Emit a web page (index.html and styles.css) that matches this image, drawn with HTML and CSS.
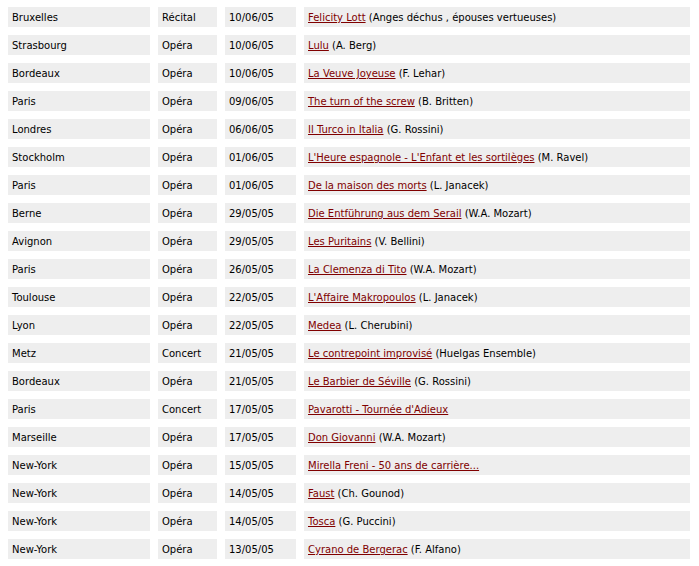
FILE: index.html
```html
<!DOCTYPE html>
<html lang="fr">
<head>
<meta charset="utf-8">
<title>Agenda</title>
<link rel="stylesheet" href="styles.css">
</head>
<body>
<table class="agenda">
<tr><td class="city">Bruxelles</td><td class="type">Récital</td><td class="date">10/06/05</td><td class="work"><a href="#">Felicity Lott</a> (Anges déchus , épouses vertueuses)</td></tr>
<tr><td class="city">Strasbourg</td><td class="type">Opéra</td><td class="date">10/06/05</td><td class="work"><a href="#">Lulu</a> (A. Berg)</td></tr>
<tr><td class="city">Bordeaux</td><td class="type">Opéra</td><td class="date">10/06/05</td><td class="work"><a href="#">La Veuve Joyeuse</a> (F. Lehar)</td></tr>
<tr><td class="city">Paris</td><td class="type">Opéra</td><td class="date">09/06/05</td><td class="work"><a href="#">The turn of the screw</a> (B. Britten)</td></tr>
<tr><td class="city">Londres</td><td class="type">Opéra</td><td class="date">06/06/05</td><td class="work"><a href="#">Il Turco in Italia</a> (G. Rossini)</td></tr>
<tr><td class="city">Stockholm</td><td class="type">Opéra</td><td class="date">01/06/05</td><td class="work"><a href="#">L'Heure espagnole - L'Enfant et les sortilèges</a> (M. Ravel)</td></tr>
<tr><td class="city">Paris</td><td class="type">Opéra</td><td class="date">01/06/05</td><td class="work"><a href="#">De la maison des morts</a> (L. Janacek)</td></tr>
<tr><td class="city">Berne</td><td class="type">Opéra</td><td class="date">29/05/05</td><td class="work"><a href="#">Die Entführung aus dem Serail</a> (W.A. Mozart)</td></tr>
<tr><td class="city">Avignon</td><td class="type">Opéra</td><td class="date">29/05/05</td><td class="work"><a href="#">Les Puritains</a> (V. Bellini)</td></tr>
<tr><td class="city">Paris</td><td class="type">Opéra</td><td class="date">26/05/05</td><td class="work"><a href="#">La Clemenza di Tito</a> (W.A. Mozart)</td></tr>
<tr><td class="city">Toulouse</td><td class="type">Opéra</td><td class="date">22/05/05</td><td class="work"><a href="#">L'Affaire Makropoulos</a> (L. Janacek)</td></tr>
<tr><td class="city">Lyon</td><td class="type">Opéra</td><td class="date">22/05/05</td><td class="work"><a href="#">Medea</a> (L. Cherubini)</td></tr>
<tr><td class="city">Metz</td><td class="type">Concert</td><td class="date">21/05/05</td><td class="work"><a href="#">Le contrepoint improvisé</a> (Huelgas Ensemble)</td></tr>
<tr><td class="city">Bordeaux</td><td class="type">Opéra</td><td class="date">21/05/05</td><td class="work"><a href="#">Le Barbier de Séville</a> (G. Rossini)</td></tr>
<tr><td class="city">Paris</td><td class="type">Concert</td><td class="date">17/05/05</td><td class="work"><a href="#">Pavarotti - Tournée d'Adieux</a></td></tr>
<tr><td class="city">Marseille</td><td class="type">Opéra</td><td class="date">17/05/05</td><td class="work"><a href="#">Don Giovanni</a> (W.A. Mozart)</td></tr>
<tr><td class="city">New-York</td><td class="type">Opéra</td><td class="date">15/05/05</td><td class="work"><a href="#">Mirella Freni - 50 ans de carrière...</a></td></tr>
<tr><td class="city">New-York</td><td class="type">Opéra</td><td class="date">14/05/05</td><td class="work"><a href="#">Faust</a> (Ch. Gounod)</td></tr>
<tr><td class="city">New-York</td><td class="type">Opéra</td><td class="date">14/05/05</td><td class="work"><a href="#">Tosca</a> (G. Puccini)</td></tr>
<tr><td class="city">New-York</td><td class="type">Opéra</td><td class="date">13/05/05</td><td class="work"><a href="#">Cyrano de Bergerac</a> (F. Alfano)</td></tr>
</table>
</body>
</html>
```
FILE: styles.css
```css
html, body {
  margin: 0;
  padding: 0;
  background: #fff;
}
body {
  font-family: "DejaVu Sans", Verdana, sans-serif;
  font-size: 10px;
  color: #000;
}
.agenda {
  border-collapse: separate;
  border-spacing: 8px;
  width: 698px;
  margin-top: -1px;
  table-layout: fixed;
}
.agenda td {
  background: #eee;
  height: 20px;
  padding: 1px 0 0 4px;
  box-sizing: border-box;
  vertical-align: middle;
  white-space: nowrap;
  line-height: 19px;
}
.city { width: 142px; }
.type { width: 59px; }
.date { width: 71px; }
.work a {
  color: #800000;
  text-decoration: underline;
}
```
